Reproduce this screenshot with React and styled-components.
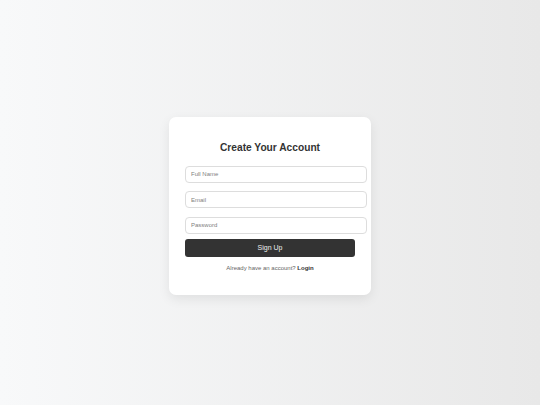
import React from 'react';
import styled, { createGlobalStyle } from 'styled-components';

const GlobalStyle = createGlobalStyle`
  html, body {
    margin: 0;
    padding: 0;
  }

  body {
    font-family: "Liberation Sans", Arial, sans-serif;
    background: linear-gradient(to right, #f8f9fa, #e8e8e8);
  }
`;

const App = () => {
  return (
    <>
      <GlobalStyle />
      <Page>
        <Card>
          <Title>Create Your Account</Title>
          <Form onSubmit={(e) => e.preventDefault()}>
            <Input type="text" placeholder="Full Name" />
            <Input type="email" placeholder="Email" />
            <Input type="password" placeholder="Password" />
            <SubmitButton type="submit">Sign Up</SubmitButton>
          </Form>
          <Footer>
            Already have an account? <LoginLink href="#">Login</LoginLink>
          </Footer>
        </Card>
      </Page>
    </>
  );
};

export default App;


const Page = styled.main`
  box-sizing: border-box;
  min-height: 100vh;
  padding-top: 6px;
  display: flex;
  align-items: center;
  justify-content: center;
`;

const Card = styled.section`
  width: 170px;
  padding: 16px;
  background: #ffffff;
  border-radius: 7px;
  box-shadow: 0 4px 12px rgba(0, 0, 0, 0.08);
`;

const Title = styled.h2`
  margin: 9px 0 12.5px;
  font-size: 10.2px;
  line-height: 11.5px;
  font-weight: 700;
  color: #333333;
  text-align: center;
`;

const Form = styled.form`
  display: flex;
  flex-direction: column;
`;

const Input = styled.input`
  box-sizing: content-box;
  width: 100%;
  height: 7px;
  padding: 4px 5px;
  margin: 0 0 8.5px;
  border: 1px solid #dddddd;
  border-radius: 4px;
  font-family: "Liberation Sans", Arial, sans-serif;
  font-size: 6px;
  color: #333333;
  background: #ffffff;
  outline: none;

  &::placeholder {
    color: #808080;
  }

  &:last-of-type {
    margin-bottom: 5px;
  }
`;

const SubmitButton = styled.button`
  height: 18px;
  width: 100%;
  padding: 0;
  border: none;
  border-radius: 3px;
  background: #333333;
  color: #eeeeee;
  font-family: "Liberation Sans", Arial, sans-serif;
  font-size: 7px;
  font-weight: 400;
  cursor: pointer;
`;

const Footer = styled.p`
  margin: 8px 0 7px;
  font-size: 6px;
  line-height: 7px;
  color: #666666;
  text-align: center;
`;

const LoginLink = styled.a`
  color: #333333;
  font-weight: 700;
  text-decoration: none;
`;
